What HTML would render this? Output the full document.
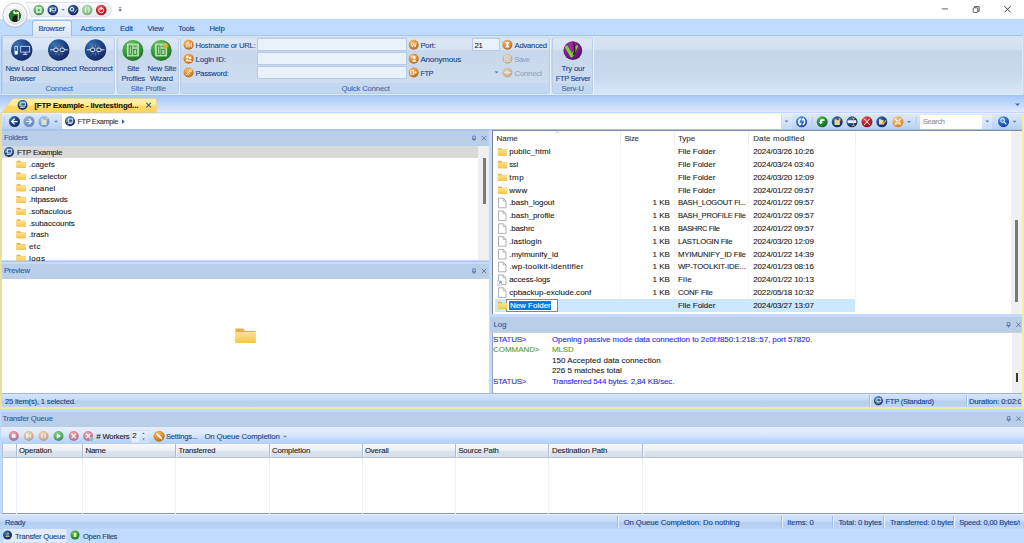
<!DOCTYPE html>
<html><head><meta charset="utf-8"><title>CuteFTP</title>
<style>
html,body{margin:0;padding:0}
body{width:1024px;height:543px;overflow:hidden;background:#bfdbff;position:relative;font-family:"Liberation Sans",sans-serif}
#root{position:absolute;left:0;top:0;width:1024px;height:543px;overflow:hidden}
#root div{position:absolute;box-sizing:border-box}
.t{position:absolute;white-space:nowrap;font-family:"Liberation Sans",sans-serif;color:#1a1a1a;-webkit-text-stroke:0.1px currentColor}
.r{color:#15428b}
.g{color:#3e6aaa}
.d{color:#8fa5c6}
.b{font-weight:bold}
svg{position:absolute;left:0;top:0}
</style></head><body><div id="root">
<div style="left:0px;top:0px;width:1024px;height:19px;background:#fff"></div>
<div style="left:0px;top:19px;width:1024px;height:17.5px;background:#bfdbff"></div>
<div style="left:0.5px;top:35.3px;width:1022.5px;height:60.2px;border:1px solid #a9c3e8;border-right-color:#dbe7f7;border-bottom-color:#d9ecf6;border-radius:3px;background:linear-gradient(#d9e5f4 0%,#d2dff0 22%,#c4d5ea 26%,#c9d9ee 70%,#d9e8f8 100%)"></div>
<div style="left:32px;top:20px;width:39.5px;height:16.2px;border:1px solid #9dbde8;border-bottom:none;border-radius:3px 3px 0 0;background:linear-gradient(#eef4fc,#dbe6f4)"></div>
<div style="left:2px;top:36.6px;width:113px;height:57.4px;border:1px solid #bccfe9;border-top-color:#cbd9ec;border-radius:3px;background:linear-gradient(#dde8f5 0%,#d5e2f2 20%,#c8d8ec 24%,#cddcef 82%,#c1d8f0 82%,#c1d8f0 100%);box-shadow:1px 0 0 #e8f0fa"></div>
<div style="left:117.4px;top:36.6px;width:61.5px;height:57.4px;border:1px solid #bccfe9;border-top-color:#cbd9ec;border-radius:3px;background:linear-gradient(#dde8f5 0%,#d5e2f2 20%,#c8d8ec 24%,#cddcef 82%,#c1d8f0 82%,#c1d8f0 100%);box-shadow:1px 0 0 #e8f0fa"></div>
<div style="left:180px;top:36.6px;width:370.29999999999995px;height:57.4px;border:1px solid #bccfe9;border-top-color:#cbd9ec;border-radius:3px;background:linear-gradient(#dde8f5 0%,#d5e2f2 20%,#c8d8ec 24%,#cddcef 82%,#c1d8f0 82%,#c1d8f0 100%);box-shadow:1px 0 0 #e8f0fa"></div>
<div style="left:552.2px;top:36.6px;width:40.59999999999991px;height:57.4px;border:1px solid #bccfe9;border-top-color:#cbd9ec;border-radius:3px;background:linear-gradient(#dde8f5 0%,#d5e2f2 20%,#c8d8ec 24%,#cddcef 82%,#c1d8f0 82%,#c1d8f0 100%);box-shadow:1px 0 0 #e8f0fa"></div>
<div style="left:257.2px;top:38.0px;width:149.8px;height:13.1px;background:#e9f1fb;border:1px solid #b7cae5"></div>
<div style="left:257.2px;top:52.05px;width:149.8px;height:13.1px;background:#e9f1fb;border:1px solid #b7cae5"></div>
<div style="left:257.2px;top:66.1px;width:149.8px;height:13.1px;background:#e9f1fb;border:1px solid #b7cae5"></div>
<div style="left:472.4px;top:38px;width:28px;height:13.1px;background:#e9f1fb;border:1px solid #b7cae5"></div>
<div style="left:0px;top:95.3px;width:1024px;height:17.2px;background:linear-gradient(#9fbff0 0%,#a9c7f7 6%,#b6d1f9 35%,#d0e1fb 75%,#e0eafb 100%)"></div>
<div style="left:0px;top:112.5px;width:1024px;height:17.5px;background:linear-gradient(#dbe8fb 0%,#c9ddf8 50%,#b7d0f3 92%,#9fbce6 100%);border-top:1px solid #f0f2e2"></div>
<div style="left:62px;top:114px;width:729.5px;height:15px;background:#fff"></div>
<div style="left:781px;top:114px;width:10.5px;height:15px;background:linear-gradient(#e4eefc,#c4d9f7);border-left:1px solid #d0e0f6"></div>
<div style="left:919.8px;top:115px;width:62.5px;height:13.5px;background:#fff"></div>
<div style="left:982.3px;top:115px;width:10.2px;height:13.5px;background:linear-gradient(#e4eefc,#c9dcf8)"></div>
<div style="left:0px;top:113px;width:2.2px;height:295.5px;background:#eadf9e"></div>
<div style="left:1022px;top:113px;width:2px;height:295.5px;background:#f4ef9a"></div>
<div style="left:0px;top:406.9px;width:1024px;height:1.8px;background:#efe8a6"></div>
<div style="left:2.2px;top:130px;width:486.8px;height:15.6px;background:#b9cee7;border-top:1px solid #a9c4ea"></div>
<div style="left:2.2px;top:145.6px;width:486.8px;height:114.9px;background:#fff;border-top:1px solid #d0d8e4"></div>
<div style="left:2.2px;top:146.2px;width:476px;height:11.4px;background:#d9d9d9"></div>
<div style="left:478px;top:146.2px;width:11px;height:114.3px;background:#f0f0f0"></div>
<div style="left:482.5px;top:158px;width:3px;height:45.5px;background:#7a7a7a"></div>
<div style="left:2.2px;top:260.5px;width:486.8px;height:3px;background:#c3dcfd;border-top:1px solid #b9c3d2"></div>
<div style="left:2.2px;top:263.5px;width:486.8px;height:15px;background:#b9cee7"></div>
<div style="left:2.2px;top:278.5px;width:486.8px;height:114.5px;background:#fff"></div>
<div style="left:489px;top:130px;width:3px;height:263px;background:#c3dcfd"></div>
<div style="left:492px;top:130px;width:530px;height:184.6px;background:#fff;border-left:1px solid #7f8794;border-top:1px solid #838b98;border-bottom:1px solid #b8c4d4"></div>
<div style="left:1011px;top:131px;width:11px;height:182.5px;background:#f0f0f0"></div>
<div style="left:1015.4px;top:219.5px;width:3px;height:82.5px;background:#7a7a7a"></div>
<div style="left:620px;top:131px;width:1px;height:182px;background:#f7f7f7"></div>
<div style="left:620px;top:131px;width:1px;height:14px;background:#eeeeee"></div>
<div style="left:673.5px;top:131px;width:1px;height:182px;background:#f7f7f7"></div>
<div style="left:673.5px;top:131px;width:1px;height:14px;background:#eeeeee"></div>
<div style="left:748px;top:131px;width:1px;height:182px;background:#f7f7f7"></div>
<div style="left:748px;top:131px;width:1px;height:14px;background:#eeeeee"></div>
<div style="left:855.4px;top:131px;width:1px;height:182px;background:#f7f7f7"></div>
<div style="left:855.4px;top:131px;width:1px;height:14px;background:#eeeeee"></div>
<div style="left:495.2px;top:299px;width:360.2px;height:12.8px;background:#cce8ff"></div>
<div style="left:506.2px;top:299px;width:52.3px;height:12.8px;background:#fff;border:1px solid #858585"></div>
<div style="left:509.4px;top:300.7px;width:41.5px;height:9.8px;background:#0a78d7"></div>
<div style="left:492px;top:314px;width:530px;height:3px;background:#c3dcfd"></div>
<div style="left:489.5px;top:317px;width:532.5px;height:15.2px;background:#b9cee7"></div>
<div style="left:492.3px;top:332.3px;width:529.7px;height:60.4px;background:#fff;border-left:1px solid #9aa7b8;border-top:1px solid #c8d2e0"></div>
<div style="left:1011.5px;top:333px;width:10.5px;height:59.7px;background:#f0f0f0"></div>
<div style="left:1015.5px;top:372.5px;width:2.8px;height:9.5px;background:#3a3a3a"></div>
<div style="left:2.2px;top:393px;width:1019.8px;height:1px;background:#9fb6d6"></div>
<div style="left:2.2px;top:394px;width:1019.8px;height:13.2px;background:linear-gradient(#d6e5fa 0%,#c5daf7 45%,#b3cdf2 55%,#bdd5f6 100%)"></div>
<div style="left:868.8px;top:395px;width:1px;height:11.5px;background:#9fbde6"></div>
<div style="left:869.8px;top:395px;width:1px;height:11.5px;background:#e6f0fc"></div>
<div style="left:965.8px;top:395px;width:1px;height:11.5px;background:#9fbde6"></div>
<div style="left:966.8px;top:395px;width:1px;height:11.5px;background:#e6f0fc"></div>
<div style="left:0px;top:408.6px;width:1024px;height:3px;background:#c3dcfd"></div>
<div style="left:0.5px;top:411.6px;width:1023px;height:15.3px;background:#b9cee7"></div>
<div style="left:0.5px;top:426.9px;width:1023px;height:17px;background:linear-gradient(#e4eefd 0%,#dce9fc 40%,#bed6fb 78%,#b2cffa 100%)"></div>
<div style="left:131px;top:430px;width:17.5px;height:12.5px;background:#e6effb;border:1px solid #d4e2f6"></div>
<div style="left:139px;top:430.5px;width:9px;height:11.5px;background:linear-gradient(#e8f1fd,#c6dbf8)"></div>
<div style="left:1.5px;top:443.8px;width:1021.2px;height:70.6px;background:#fff;border-left:1px solid #b4c6de;border-bottom:1px solid #8c9db5"></div>
<div style="left:2.5px;top:443.8px;width:1020.2px;height:13.8px;background:linear-gradient(#f7f9fc 0%,#eaeff6 50%,#dde4ee 55%,#d5deea 100%);border-bottom:1px solid #b7c3d4"></div>
<div style="left:15.5px;top:444px;width:1px;height:13px;background:#aebbd0"></div>
<div style="left:16.5px;top:444px;width:1px;height:13px;background:#f4f7fb"></div>
<div style="left:15.5px;top:457.6px;width:1px;height:56px;background:#edf3fa"></div>
<div style="left:82px;top:444px;width:1px;height:13px;background:#aebbd0"></div>
<div style="left:83px;top:444px;width:1px;height:13px;background:#f4f7fb"></div>
<div style="left:82px;top:457.6px;width:1px;height:56px;background:#edf3fa"></div>
<div style="left:175.4px;top:444px;width:1px;height:13px;background:#aebbd0"></div>
<div style="left:176.4px;top:444px;width:1px;height:13px;background:#f4f7fb"></div>
<div style="left:175.4px;top:457.6px;width:1px;height:56px;background:#edf3fa"></div>
<div style="left:268.5px;top:444px;width:1px;height:13px;background:#aebbd0"></div>
<div style="left:269.5px;top:444px;width:1px;height:13px;background:#f4f7fb"></div>
<div style="left:268.5px;top:457.6px;width:1px;height:56px;background:#edf3fa"></div>
<div style="left:361.5px;top:444px;width:1px;height:13px;background:#aebbd0"></div>
<div style="left:362.5px;top:444px;width:1px;height:13px;background:#f4f7fb"></div>
<div style="left:361.5px;top:457.6px;width:1px;height:56px;background:#edf3fa"></div>
<div style="left:455px;top:444px;width:1px;height:13px;background:#aebbd0"></div>
<div style="left:456px;top:444px;width:1px;height:13px;background:#f4f7fb"></div>
<div style="left:455px;top:457.6px;width:1px;height:56px;background:#edf3fa"></div>
<div style="left:548px;top:444px;width:1px;height:13px;background:#aebbd0"></div>
<div style="left:549px;top:444px;width:1px;height:13px;background:#f4f7fb"></div>
<div style="left:548px;top:457.6px;width:1px;height:56px;background:#edf3fa"></div>
<div style="left:641.5px;top:444px;width:1px;height:13px;background:#aebbd0"></div>
<div style="left:642.5px;top:444px;width:1px;height:13px;background:#f4f7fb"></div>
<div style="left:641.5px;top:457.6px;width:1px;height:56px;background:#edf3fa"></div>
<div style="left:0px;top:514.4px;width:1024px;height:14.6px;background:linear-gradient(#d5e4fa 0%,#c6dbf7 45%,#b4cdf1 55%,#bcd4f5 100%);border-top:1px solid #e4eefb"></div>
<div style="left:617px;top:516px;width:1px;height:12px;background:#9fbde6"></div>
<div style="left:618px;top:516px;width:1px;height:12px;background:#e6f0fc"></div>
<div style="left:780.5px;top:516px;width:1px;height:12px;background:#9fbde6"></div>
<div style="left:781.5px;top:516px;width:1px;height:12px;background:#e6f0fc"></div>
<div style="left:831.7px;top:516px;width:1px;height:12px;background:#9fbde6"></div>
<div style="left:832.7px;top:516px;width:1px;height:12px;background:#e6f0fc"></div>
<div style="left:882.8px;top:516px;width:1px;height:12px;background:#9fbde6"></div>
<div style="left:883.8px;top:516px;width:1px;height:12px;background:#e6f0fc"></div>
<div style="left:953.2px;top:516px;width:1px;height:12px;background:#9fbde6"></div>
<div style="left:954.2px;top:516px;width:1px;height:12px;background:#e6f0fc"></div>
<div style="left:0px;top:529px;width:1024px;height:14px;background:#bfdbff"></div>
<div style="left:2.5px;top:529px;width:64px;height:14px;background:#e0ecfb;border:1px solid #cfdff5;border-top:none"></div>
<svg width="1024" height="543" viewBox="0 0 1024 543">
<defs>
<radialGradient id="gb" cx="0.3" cy="0.25" r="0.85"><stop offset="0" stop-color="#3873b4"/><stop offset="0.5" stop-color="#1e468a"/><stop offset="1" stop-color="#14245a"/></radialGradient>
<radialGradient id="gg" cx="0.4" cy="0.3" r="0.8"><stop offset="0" stop-color="#7ccf6a"/><stop offset="0.55" stop-color="#2f9a34"/><stop offset="1" stop-color="#166a22"/></radialGradient>
<radialGradient id="go" cx="0.4" cy="0.3" r="0.8"><stop offset="0" stop-color="#f4c070"/><stop offset="0.55" stop-color="#d98a2c"/><stop offset="1" stop-color="#a55c12"/></radialGradient>
<radialGradient id="gr" cx="0.4" cy="0.3" r="0.8"><stop offset="0" stop-color="#ee6a6a"/><stop offset="0.55" stop-color="#c8202a"/><stop offset="1" stop-color="#8a1018"/></radialGradient>
<radialGradient id="gw" cx="0.42" cy="0.32" r="0.78"><stop offset="0" stop-color="#ffffff"/><stop offset="0.55" stop-color="#eceff3"/><stop offset="0.85" stop-color="#cfd4dc"/><stop offset="1" stop-color="#9aa2b0"/></radialGradient>
<linearGradient id="gf" x1="0" y1="0" x2="0" y2="1"><stop offset="0" stop-color="#ffe28a"/><stop offset="1" stop-color="#f7c64a"/></linearGradient>
<radialGradient id="gb2" cx="0.35" cy="0.25" r="0.85"><stop offset="0" stop-color="#6aa8f0"/><stop offset="0.5" stop-color="#2a66c8"/><stop offset="1" stop-color="#163a8a"/></radialGradient>
<radialGradient id="gg2" cx="0.35" cy="0.25" r="0.85"><stop offset="0" stop-color="#58b860"/><stop offset="0.5" stop-color="#228a34"/><stop offset="1" stop-color="#125a20"/></radialGradient>
<radialGradient id="gr2" cx="0.35" cy="0.25" r="0.85"><stop offset="0" stop-color="#e05a5a"/><stop offset="0.5" stop-color="#b8222c"/><stop offset="1" stop-color="#7a1018"/></radialGradient>
<radialGradient id="go2" cx="0.35" cy="0.25" r="0.85"><stop offset="0" stop-color="#f8cc88"/><stop offset="0.55" stop-color="#e8a04c"/><stop offset="1" stop-color="#c07828"/></radialGradient>
</defs>

<defs><linearGradient id="gp" x1="0" y1="0" x2="0" y2="1"><stop offset="0" stop-color="#fbfcfd"/><stop offset="1" stop-color="#e6e9ef"/></linearGradient></defs>
<path d="M26 2.4 H104 a7.2 7.2 0 0 1 0 14.4 H31.5 C29.5 13 29 6 26 2.4 z" fill="url(#gp)" stroke="#cdd2da" stroke-width="0.7"/>
<circle cx="15" cy="15.2" r="12.2" fill="url(#gw)" stroke="#bcc2cc" stroke-width="0.9"/>
<circle cx="15" cy="15.2" r="10.6" fill="none" stroke="#fff" stroke-width="1.2" opacity="0.8"/>
<circle cx="15" cy="15.8" r="6.2" fill="#1d7a2e"/><path d="M12.8 12 l2 -2.6 1.2 2.2 3 0.4 v2 h-5z" fill="#efe8a8"/><path d="M12 21 q0.5 -5 3 -5.5 h2.2 v6 q-2.5 1 -5.2 -0.5z" fill="#1c1a18"/><path d="M14.6 9.8 l1.5 2.4" stroke="#222" stroke-width="1"/><path d="M18.4 14 v6.2" stroke="#e8f0e0" stroke-width="0.8"/>
<g opacity="0.8"><circle cx="38.8" cy="10" r="5.3" fill="url(#gg)"/><rect x="36.6" y="7.6" width="4.6" height="4.8" fill="#bfe3b8" stroke="#e4f4e0" stroke-width="0.7"/><rect x="38" y="9" width="1.8" height="2.2" fill="#2f8f3a"/></g>
<g opacity="1"><circle cx="52.8" cy="10" r="5.3" fill="url(#gb)"/><rect x="49.6" y="8" width="1.3" height="4" fill="#fff"/><rect x="51.8" y="8" width="4" height="2.8" fill="none" stroke="#fff" stroke-width="0.8"/><path d="M52.6 12.2 h2.6" stroke="#fff" stroke-width="0.7"/></g>
<path d="M61.3 8.950000000000001 h3.4 l-1.7 1.7 z" fill="#5a7ab0"/>
<g opacity="1"><circle cx="73.2" cy="10" r="5.3" fill="url(#gb)"/><circle cx="72" cy="9.2" r="1.8" fill="none" stroke="#fff" stroke-width="1"/><path d="M73.3 11.3 l1.4 1.3 l2.2 -3.2" stroke="#f0a030" stroke-width="1" fill="none"/></g>
<g opacity="0.5"><circle cx="87.2" cy="10" r="5.3" fill="url(#gg)"/><path d="M86 7.4 q-1.8 2.6 0 5.2 M88.4 7.4 q1.8 2.6 0 5.2" stroke="#fff" stroke-width="1" fill="none"/></g>
<g opacity="1"><circle cx="101.2" cy="10" r="5.3" fill="url(#gr)"/><circle cx="101.2" cy="10.4" r="2.5" fill="none" stroke="#fff" stroke-width="0.9"/><path d="M101.2 6.8 v3.2" stroke="#fff" stroke-width="1"/></g>
<path d="M118.8 7.8 h2.6" stroke="#3a4a8a" stroke-width="0.8"/><path d="M118.3 9.4 h3.6 l-1.8 2 z" fill="#3a4a8a"/>
<path d="M941.8 8.9 h6.2" stroke="#555" stroke-width="0.9"/>
<rect x="973.2" y="7.8" width="4.6" height="4.6" rx="0.8" fill="none" stroke="#333" stroke-width="0.8"/><path d="M974.6 7.8 v-1.2 h4.6 v4.6 h-1.4" fill="none" stroke="#333" stroke-width="0.8"/>
<path d="M1004.4 6.2 l6.2 6.2 M1010.6 6.2 l-6.2 6.2" stroke="#3a3a3a" stroke-width="1"/>
<g opacity="1"><circle cx="21.7" cy="50" r="10.7" fill="url(#gb)"/><rect x="14.9" y="46.3" width="2.5" height="7.9" fill="none" stroke="#e8eef8" stroke-width="0.7"/><rect x="14.9" y="51" width="2.5" height="3.2" fill="#fff"/><rect x="20.7" y="46.3" width="9" height="5.8" fill="#1c3f86" stroke="#d8e4f4" stroke-width="0.8"/><path d="M23 54.3 h4.4 M25.2 52.2 v2" stroke="#e8eef8" stroke-width="0.9"/></g>
<g opacity="1"><circle cx="58.7" cy="50" r="10.7" fill="url(#gb)"/><path d="M50.099999999999994 49.8 h4.4 M63.5 49.8 h4.4" stroke="#fff" stroke-width="0.8"/><rect x="53.9" y="48.1" width="4.2" height="3.4" rx="1.2" fill="#1a3a80" stroke="#fff" stroke-width="0.9"/><rect x="60.1" y="48.1" width="4.2" height="3.4" rx="1.2" fill="#1a3a80" stroke="#fff" stroke-width="0.9"/><path d="M58.9 44.5 v2.5 M58.9 53 v2.5 M55.4 45.5 l1.3 2 M62.4 45.5 l-1.3 2 M55.4 54.5 l1.3 -2 M62.4 54.5 l-1.3 -2" stroke="#c8a060" stroke-width="0.6"/></g>
<g opacity="1"><circle cx="95.5" cy="50" r="10.7" fill="url(#gb)"/><path d="M86.8 49.8 h4.4 M100.19999999999999 49.8 h4.4" stroke="#fff" stroke-width="0.8"/><rect x="90.6" y="48.1" width="4.2" height="3.4" rx="1.2" fill="#1a3a80" stroke="#fff" stroke-width="0.9"/><rect x="96.8" y="48.1" width="4.2" height="3.4" rx="1.2" fill="#1a3a80" stroke="#fff" stroke-width="0.9"/><path d="M95.6 44.5 v2.5 M95.6 53 v2.5 M92.1 45.5 l1.3 2 M99.1 45.5 l-1.3 2 M92.1 54.5 l1.3 -2 M99.1 54.5 l-1.3 -2" stroke="#c8a060" stroke-width="0.6"/></g>
<g opacity="1"><circle cx="132.9" cy="50.4" r="10.5" fill="url(#gg)"/><rect x="127.4" y="44" width="11" height="12" fill="#9ed39a" stroke="#d8f0d4" stroke-width="0.7"/><rect x="129.2" y="46" width="2.4" height="8.5" fill="none" stroke="#2f8a38" stroke-width="0.8"/><rect x="133.4" y="49.5" width="3.2" height="5" fill="none" stroke="#2f8a38" stroke-width="0.8"/><path d="M133.4 46.2 h3.4" stroke="#2f8a38" stroke-width="0.8"/></g>
<g opacity="1"><circle cx="161.2" cy="50.4" r="10.5" fill="url(#gg)"/><rect x="155.7" y="44" width="11" height="12" fill="#9ed39a" stroke="#d8f0d4" stroke-width="0.7"/><rect x="157.5" y="46" width="2.4" height="8.5" fill="none" stroke="#2f8a38" stroke-width="0.8"/><rect x="161.7" y="49.5" width="3.2" height="5" fill="none" stroke="#2f8a38" stroke-width="0.8"/><path d="M161.7 46.2 h3.4" stroke="#2f8a38" stroke-width="0.8"/><path d="M165.5 42.5 l0.9 1.9 2 -0.6 -1 1.8 1.6 1.3 -2.1 0.3 -0.1 2.1 -1.3 -1.6 -1.8 1 0.6 -2 -1.9 -0.9 2 -0.6z" fill="#f5a623"/></g>
<g opacity="1"><circle cx="188.6" cy="44.8" r="5" fill="url(#go)"/><path d="M186.2 47.4 v-4.6 M188.0 47.4 v-5.6 M189.79999999999998 47.4 v-3.6 M191.4 47.4 v-4.8" stroke="#fff" stroke-width="0.8" fill="none" opacity="0.92"/></g>
<g opacity="1"><circle cx="188.6" cy="58.65" r="5" fill="url(#go)"/><circle cx="187.4" cy="57.05" r="1.3" fill="#fff" opacity="0.92"/><path d="M185.4 61.25 q2 -4 4 0z" fill="#fff" opacity="0.92"/><circle cx="190.2" cy="58.05" r="1.2" fill="#fff" opacity="0.92"/><path d="M188.4 61.65 q1.8 -3.4 3.8 0z" fill="#fff" opacity="0.92"/></g>
<g opacity="1"><circle cx="188.6" cy="72.5" r="5" fill="url(#go)"/><path d="M186.0 75.1 l4.2 -4.2 M188.0 74.5 l1 1 M189.2 73.3 l1 1" stroke="#fff" stroke-width="0.8" fill="none" opacity="0.92"/><circle cx="190.6" cy="70.5" r="1.2" stroke="#fff" stroke-width="0.8" fill="none" opacity="0.92"/></g>
<g opacity="1"><circle cx="413.7" cy="44.8" r="5" fill="url(#go)"/><path d="M411.09999999999997 42.599999999999994 l1.2 4.4 l1.4 -3.4 l1.4 3.4 l1.2 -4.4" stroke="#fff" stroke-width="0.8" fill="none" opacity="0.92"/></g>
<g opacity="1"><circle cx="413.7" cy="58.65" r="5" fill="url(#go)"/><circle cx="414.3" cy="57.449999999999996" r="1.4" fill="#fff" opacity="0.92"/><path d="M411.9 61.65 q2.4 -4.4 4.8 0z" fill="#fff" opacity="0.92"/><path d="M410.7 56.05 q1.6 -0.8 1.4 0.8 l-0.8 0.8" stroke="#fff" stroke-width="0.8" fill="none" opacity="0.92"/></g>
<g opacity="1"><circle cx="413.7" cy="72.5" r="5" fill="url(#go)"/><rect x="410.7" y="70.7" width="3" height="3.6" stroke="#fff" stroke-width="0.8" fill="none" opacity="0.92"/><rect x="414.5" y="71.6" width="2" height="1.8" fill="#fff" opacity="0.92"/></g>
<path d="M494.7 71.39999999999999 h3.6 l-1.8 1.8 z" fill="#4a6aa0"/>
<g opacity="1"><circle cx="507.4" cy="44.8" r="5" fill="url(#go)"/><path d="M505.2 42.0 h4.4 l-1.6 2.8 l1.6 2.8 h-4.4 l1.6 -2.8z" fill="#fff" opacity="0.92"/></g>
<g opacity="0.45"><circle cx="507.4" cy="58.65" r="5" fill="url(#go)"/><rect x="504.79999999999995" y="56.05" width="5.2" height="5.2" stroke="#fff" stroke-width="0.8" fill="none" opacity="0.92"/><rect x="506.2" y="58.25" width="2.4" height="1.6" fill="#fff" opacity="0.92"/></g>
<g opacity="0.45"><circle cx="507.4" cy="72.5" r="5" fill="url(#go)"/><path d="M504.0 72.5 h6.8" stroke="#fff" stroke-width="0.8" fill="none" opacity="0.92"/><rect x="505.59999999999997" y="71.2" width="3.6" height="2.6" rx="0.8" fill="#fff" opacity="0.92"/></g>
<defs><radialGradient id="gpu" cx="0.35" cy="0.3" r="0.8"><stop offset="0" stop-color="#a030a8"/><stop offset="0.6" stop-color="#7a1a84"/><stop offset="1" stop-color="#4a0e58"/></radialGradient></defs>
<circle cx="572.8" cy="50.6" r="9.4" fill="url(#gpu)"/><path d="M566.6 47.2 l5 8.4" fill="none" stroke="#7ccf3c" stroke-width="3.2" stroke-linecap="round"/><path d="M571.8 56 l5 -9.5" fill="none" stroke="#7ccf3c" stroke-width="2.6" stroke-linecap="round"/><path d="M572.5 55.5 q2.5 -7 0.2 -14.8 q4 6 2.4 13z" fill="#2a1c20"/>
<defs><linearGradient id="gt" x1="0" y1="0" x2="0" y2="1"><stop offset="0" stop-color="#fff3a8"/><stop offset="0.47" stop-color="#ffec90"/><stop offset="0.53" stop-color="#ffd868"/><stop offset="1" stop-color="#ffd25a"/></linearGradient></defs>
<path d="M2 112.6 L12.5 99.2 Q13 98.6 14 98.6 H155 Q156.3 98.6 156.3 99.9 V112.6 z" fill="url(#gt)" stroke="#e8c870" stroke-width="0.5"/>
<g opacity="1"><circle cx="22.5" cy="105" r="5" fill="url(#gb)"/><ellipse cx="22.5" cy="102.75" rx="3.5" ry="2.0" fill="#7fb0e8" opacity="0.55"/><rect x="20.9" y="102.8" width="4.4" height="3.2" fill="#2a5aa0" stroke="#fff" stroke-width="0.8"/><path d="M20.1 107.4 h4.6" stroke="#fff" stroke-width="0.8"/><path d="M18.9 103.4 l2.2 1.3 l-2.2 1.3z" fill="#9ad24e"/></g>
<path d="M146.3 102.8 l4.6 4.6 M150.9 102.8 l-4.6 4.6" stroke="#34528f" stroke-width="1.05"/>
<path d="M1014.9 103.5 h5.2 l-2.6 2.6 z" fill="#4a6aa8"/>
<rect x="4" y="117.5" width="1" height="1" fill="#8fb0e0"/><rect x="4.6" y="118.1" width="0.8" height="0.8" fill="#f0f6fe"/>
<rect x="4" y="119.5" width="1" height="1" fill="#8fb0e0"/><rect x="4.6" y="120.1" width="0.8" height="0.8" fill="#f0f6fe"/>
<rect x="4" y="121.5" width="1" height="1" fill="#8fb0e0"/><rect x="4.6" y="122.1" width="0.8" height="0.8" fill="#f0f6fe"/>
<rect x="4" y="123.5" width="1" height="1" fill="#8fb0e0"/><rect x="4.6" y="124.1" width="0.8" height="0.8" fill="#f0f6fe"/>
<g opacity="1"><circle cx="14.5" cy="121.6" r="5.5" fill="url(#gb)"/><path d="M17.6 121.6 h-5.6 M14.6 118.8 l-2.9 2.8 2.9 2.8" fill="none" stroke="#fff" stroke-width="1.2"/></g>
<g opacity="0.45"><circle cx="29" cy="121.5" r="5.5" fill="url(#gb)"/><path d="M26 121.5 h5.5 M28.7 118.8 l2.8 2.7 -2.8 2.7" fill="none" stroke="#fff" stroke-width="1.2"/></g>
<g opacity="0.45"><circle cx="44" cy="121.6" r="5.5" fill="url(#gb2)"/><path d="M41.4 119.2 h2 l0.6 0.7 h2.6 v5 h-5.2z" fill="#f8e8a8"/><circle cx="46.6" cy="118.6" r="1.2" fill="#f5a623"/></g>
<path d="M54.1 120.85 h3.8 l-1.9 1.9 z" fill="#5a7ab0"/>
<path d="M784.6 120.55 h3.8 l-1.9 1.9 z" fill="#5a7ab0"/>
<g opacity="1"><circle cx="70" cy="121.2" r="5" fill="url(#gb)"/><ellipse cx="70" cy="118.95" rx="3.5" ry="2.0" fill="#7fb0e8" opacity="0.55"/><rect x="68.4" y="119.0" width="4.4" height="3.2" fill="#2a5aa0" stroke="#fff" stroke-width="0.8"/><path d="M67.6 123.60000000000001 h4.6" stroke="#fff" stroke-width="0.8"/><path d="M66.4 119.60000000000001 l2.2 1.3 l-2.2 1.3z" fill="#9ad24e"/></g>
<path d="M122 119.2 l2.6 2.4 -2.6 2.4z" fill="#3a5a9a"/>
<g opacity="1"><circle cx="801.6" cy="121.8" r="5.5" fill="url(#gb2)"/><path d="M800.6 118.6 q-3.4 2.6 -0.6 6.2 l1.2 -1.4 M802.8 125.0 q3.4 -2.6 0.6 -6.2 l-1.2 1.4" fill="none" stroke="#fff" stroke-width="1.5"/></g>
<rect x="812" y="117.5" width="1" height="1" fill="#8fb0e0"/><rect x="812.6" y="118.1" width="0.8" height="0.8" fill="#f0f6fe"/>
<rect x="812" y="119.5" width="1" height="1" fill="#8fb0e0"/><rect x="812.6" y="120.1" width="0.8" height="0.8" fill="#f0f6fe"/>
<rect x="812" y="121.5" width="1" height="1" fill="#8fb0e0"/><rect x="812.6" y="122.1" width="0.8" height="0.8" fill="#f0f6fe"/>
<rect x="812" y="123.5" width="1" height="1" fill="#8fb0e0"/><rect x="812.6" y="124.1" width="0.8" height="0.8" fill="#f0f6fe"/>
<g opacity="1"><circle cx="822.2" cy="121.8" r="5.5" fill="url(#gg2)"/><path d="M824.6 119.39999999999999 q-4.4 -1.4 -4.6 2.6 l-1.2 0 l2 2.6 l2 -2.6 l-1.2 0 q0.2 -1.8 3 -1.2z" fill="#fff"/></g>
<g opacity="1"><circle cx="837.2" cy="121.8" r="5.5" fill="url(#gb)"/><path d="M834.6 119.39999999999999 h2 l0.6 0.7 h2.6 v5 h-5.2z" fill="#f0dc98"/><path d="M837.2 119.8 v5" stroke="#c8a850" stroke-width="0.5"/><path d="M839.6 117.39999999999999 l0.6 1.2 1.3 0.1 -1 0.9 0.3 1.3 -1.2 -0.7 -1.2 0.7 0.3 -1.3 -1 -0.9 1.3 -0.1z" fill="#f5a623"/></g>
<g opacity="1"><circle cx="852" cy="121.8" r="5.5" fill="url(#gb)"/><rect x="847.6" y="120.3" width="8.6" height="2.8" fill="#fff"/><path d="M853.4 118.0 v7.6 M851.8 117.89999999999999 q1.6 0 1.6 0.8 q0 -0.8 1.6 -0.8 M851.8 125.7 q1.6 0 1.6 -0.8 q0 0.8 1.6 0.8" stroke="#f0c040" stroke-width="0.7" fill="none"/></g>
<g opacity="1"><circle cx="867" cy="121.8" r="5.5" fill="url(#gr2)"/><path d="M864 118.6 l6 6.4 M870 118.6 l-6 6.4" stroke="#f4e8e0" stroke-width="1"/></g>
<g opacity="1"><circle cx="881.8" cy="121.8" r="5.5" fill="url(#gb)"/><path d="M879 119.2 h2 l0.6 0.7 h1.8 v4.6 h-4.4z" fill="#f0dc98"/><path d="M882.2 122.39999999999999 l1.3 1.5 2.6 -3.8" stroke="#f5b030" stroke-width="1.1" fill="none"/></g>
<g opacity="1"><circle cx="897.9" cy="121.8" r="5.5" fill="url(#go2)"/><path d="M895.2 119.2 l5.4 5.2 M900.6 119.2 l-5.4 5.2" stroke="#fff" stroke-width="0.7" opacity="0.9"/><rect x="896.4" y="120.39999999999999" width="3" height="2.8" fill="#f0b870" stroke="#fff" stroke-width="0.6"/><path d="M894.6 118.8 h1.6 v1.2 h-1.6z M899.6 118.8 h1.6 v1.2 h-1.6z M894.6 123.6 h1.6 v1.2 h-1.6z M899.6 123.6 h1.6 v1.2 h-1.6z" fill="#fff" opacity="0.85"/></g>
<path d="M907.1 121.05 h3.8 l-1.9 1.9 z" fill="#5a7ab0"/>
<rect x="916" y="117.5" width="1" height="1" fill="#8fb0e0"/><rect x="916.6" y="118.1" width="0.8" height="0.8" fill="#f0f6fe"/>
<rect x="916" y="119.5" width="1" height="1" fill="#8fb0e0"/><rect x="916.6" y="120.1" width="0.8" height="0.8" fill="#f0f6fe"/>
<rect x="916" y="121.5" width="1" height="1" fill="#8fb0e0"/><rect x="916.6" y="122.1" width="0.8" height="0.8" fill="#f0f6fe"/>
<rect x="916" y="123.5" width="1" height="1" fill="#8fb0e0"/><rect x="916.6" y="124.1" width="0.8" height="0.8" fill="#f0f6fe"/>
<path d="M985.4 120.55 h3.8 l-1.9 1.9 z" fill="#5a7ab0"/>
<g opacity="1"><circle cx="1003.5" cy="121.7" r="5.5" fill="url(#gb2)"/><circle cx="1002.6" cy="120.4" r="1.9" fill="none" stroke="#fff" stroke-width="0.9"/><path d="M1004 121.9 l2.4 2.4" stroke="#fff" stroke-width="1.1"/></g>
<path d="M1012.6 120.85 h3.8 l-1.9 1.9 z" fill="#5a7ab0"/>
<path d="M472.7 136.0 h2.6 v3.2 h-2.6z M471.8 139.2 h4.4 M474 139.2 v2" fill="none" stroke="#4a6aa0" stroke-width="0.7"/>
<path d="M481.8 136.0 l4.4 4.4 M486.2 136.0 l-4.4 4.4" stroke="#4a6aa0" stroke-width="0.8"/>
<g opacity="1"><circle cx="9" cy="152" r="5" fill="url(#gb)"/><ellipse cx="9" cy="149.75" rx="3.5" ry="2.0" fill="#7fb0e8" opacity="0.55"/><rect x="7.4" y="149.8" width="4.4" height="3.2" fill="#2a5aa0" stroke="#fff" stroke-width="0.8"/><path d="M6.6 154.4 h4.6" stroke="#fff" stroke-width="0.8"/><path d="M5.4 150.4 l2.2 1.3 l-2.2 1.3z" fill="#9ad24e"/></g>
<path d="M16.5 160.85 h3.61 l0.9500000000000001 1.216 h4.94 v5.784 h-9.5 z" fill="#e9b040"/><rect x="16.5" y="162.302" width="9.5" height="5.548" rx="0.5" fill="url(#gf)"/>
<path d="M16.5 172.57999999999998 h3.61 l0.9500000000000001 1.216 h4.94 v5.784 h-9.5 z" fill="#e9b040"/><rect x="16.5" y="174.03199999999998" width="9.5" height="5.548" rx="0.5" fill="url(#gf)"/>
<path d="M16.5 184.31 h3.61 l0.9500000000000001 1.216 h4.94 v5.784 h-9.5 z" fill="#e9b040"/><rect x="16.5" y="185.762" width="9.5" height="5.548" rx="0.5" fill="url(#gf)"/>
<path d="M16.5 196.04 h3.61 l0.9500000000000001 1.216 h4.94 v5.784 h-9.5 z" fill="#e9b040"/><rect x="16.5" y="197.492" width="9.5" height="5.548" rx="0.5" fill="url(#gf)"/>
<path d="M16.5 207.77 h3.61 l0.9500000000000001 1.216 h4.94 v5.784 h-9.5 z" fill="#e9b040"/><rect x="16.5" y="209.222" width="9.5" height="5.548" rx="0.5" fill="url(#gf)"/>
<path d="M16.5 219.5 h3.61 l0.9500000000000001 1.216 h4.94 v5.784 h-9.5 z" fill="#e9b040"/><rect x="16.5" y="220.952" width="9.5" height="5.548" rx="0.5" fill="url(#gf)"/>
<path d="M16.5 231.23 h3.61 l0.9500000000000001 1.216 h4.94 v5.784 h-9.5 z" fill="#e9b040"/><rect x="16.5" y="232.682" width="9.5" height="5.548" rx="0.5" fill="url(#gf)"/>
<path d="M16.5 242.96 h3.61 l0.9500000000000001 1.216 h4.94 v5.784 h-9.5 z" fill="#e9b040"/><rect x="16.5" y="244.412" width="9.5" height="5.548" rx="0.5" fill="url(#gf)"/>
<clipPath id="ctree"><rect x="2" y="146" width="476" height="114.4"/></clipPath><g clip-path="url(#ctree)">
<path d="M16.5 254.70000000000002 h3.61 l0.9500000000000001 1.216 h4.94 v5.784 h-9.5 z" fill="#e9b040"/><rect x="16.5" y="256.15200000000004" width="9.5" height="5.548" rx="0.5" fill="url(#gf)"/>
</g>
<path d="M472.7 268.8 h2.6 v3.2 h-2.6z M471.8 272 h4.4 M474 272 v2" fill="none" stroke="#4a6aa0" stroke-width="0.7"/>
<path d="M481.8 268.8 l4.4 4.4 M486.2 268.8 l-4.4 4.4" stroke="#4a6aa0" stroke-width="0.8"/>
<path d="M235.5 328.6 h7.6 l2.0 2.4 h10.4 v12.0 h-20 z" fill="#e9b040"/><rect x="235.5" y="332.05" width="20" height="10.95" rx="0.5" fill="url(#gf)"/>
<path d="M555.3 133.4 l2 -1.8 2 1.8" fill="none" stroke="#9a9a9a" stroke-width="0.6"/>
<path d="M497.9 148.20000000000002 h3.4959999999999996 l0.9199999999999999 1.248 h4.784 v5.952 h-9.2 z" fill="#e9b040"/><rect x="497.9" y="149.70600000000002" width="9.2" height="5.694" rx="0.5" fill="url(#gf)"/>
<path d="M497.9 161.00000000000003 h3.4959999999999996 l0.9199999999999999 1.248 h4.784 v5.952 h-9.2 z" fill="#e9b040"/><rect x="497.9" y="162.50600000000003" width="9.2" height="5.694" rx="0.5" fill="url(#gf)"/>
<path d="M497.9 173.8 h3.4959999999999996 l0.9199999999999999 1.248 h4.784 v5.952 h-9.2 z" fill="#e9b040"/><rect x="497.9" y="175.306" width="9.2" height="5.694" rx="0.5" fill="url(#gf)"/>
<path d="M497.9 186.60000000000002 h3.4959999999999996 l0.9199999999999999 1.248 h4.784 v5.952 h-9.2 z" fill="#e9b040"/><rect x="497.9" y="188.10600000000002" width="9.2" height="5.694" rx="0.5" fill="url(#gf)"/>
<path d="M498.5 198.2 h4.695 l2.805 2.805 v6.795 h-7.5 z" fill="#fff" stroke="#969696" stroke-width="0.75"/><path d="M503.195 198.2 v2.805 h2.805" fill="none" stroke="#969696" stroke-width="0.65"/>
<path d="M498.5 211.0 h4.695 l2.805 2.805 v6.795 h-7.5 z" fill="#fff" stroke="#969696" stroke-width="0.75"/><path d="M503.195 211.0 v2.805 h2.805" fill="none" stroke="#969696" stroke-width="0.65"/>
<path d="M498.5 223.8 h4.695 l2.805 2.805 v6.795 h-7.5 z" fill="#fff" stroke="#969696" stroke-width="0.75"/><path d="M503.195 223.8 v2.805 h2.805" fill="none" stroke="#969696" stroke-width="0.65"/>
<path d="M498.5 236.60000000000002 h4.695 l2.805 2.805 v6.795 h-7.5 z" fill="#fff" stroke="#969696" stroke-width="0.75"/><path d="M503.195 236.60000000000002 v2.805 h2.805" fill="none" stroke="#969696" stroke-width="0.65"/>
<path d="M498.5 249.4 h4.695 l2.805 2.805 v6.795 h-7.5 z" fill="#fff" stroke="#969696" stroke-width="0.75"/><path d="M503.195 249.4 v2.805 h2.805" fill="none" stroke="#969696" stroke-width="0.65"/>
<path d="M498.5 262.2 h4.695 l2.805 2.805 v6.795 h-7.5 z" fill="#fff" stroke="#969696" stroke-width="0.75"/><path d="M503.195 262.2 v2.805 h2.805" fill="none" stroke="#969696" stroke-width="0.65"/>
<path d="M498.5 275.0 h4.695 l2.805 2.805 v6.795 h-7.5 z" fill="#fff" stroke="#969696" stroke-width="0.75"/><path d="M503.195 275.0 v2.805 h2.805" fill="none" stroke="#969696" stroke-width="0.65"/>
<rect x="497.6" y="281.0" width="4.2" height="4.2" fill="#fff" stroke="#9ab" stroke-width="0.4"/><path d="M498.4 284.40000000000003 l2.4 -2.4 M499.2 281.8 h1.8 v1.8" stroke="#2a5fd0" stroke-width="0.7" fill="none"/>
<path d="M498.5 287.8 h4.695 l2.805 2.805 v6.795 h-7.5 z" fill="#fff" stroke="#969696" stroke-width="0.75"/><path d="M503.195 287.8 v2.805 h2.805" fill="none" stroke="#969696" stroke-width="0.65"/>
<path d="M497.9 301.80000000000007 h3.4959999999999996 l0.9199999999999999 1.248 h4.784 v5.952 h-9.2 z" fill="#e9b040"/><rect x="497.9" y="303.30600000000004" width="9.2" height="5.694" rx="0.5" fill="url(#gf)"/>
<path d="M1007.2 322.5 h2.6 v3.2 h-2.6z M1006.3 325.7 h4.4 M1008.5 325.7 v2" fill="none" stroke="#4a6aa0" stroke-width="0.7"/>
<path d="M1016.3 322.5 l4.4 4.4 M1020.7 322.5 l-4.4 4.4" stroke="#4a6aa0" stroke-width="0.8"/>
<g opacity="1"><circle cx="878.4" cy="400.8" r="4.5" fill="url(#gb)"/><ellipse cx="878.4" cy="398.77500000000003" rx="3.15" ry="1.8" fill="#7fb0e8" opacity="0.55"/><rect x="876.9599999999999" y="398.82" width="3.9600000000000004" height="2.8800000000000003" fill="#2a5aa0" stroke="#fff" stroke-width="0.7200000000000001"/><path d="M876.24 402.96000000000004 h4.14" stroke="#fff" stroke-width="0.7200000000000001"/><path d="M875.16 399.36 l1.9800000000000002 1.1700000000000002 l-1.9800000000000002 1.1700000000000002z" fill="#9ad24e"/></g>
<path d="M1007.4000000000001 416.6 h2.6 v3.2 h-2.6z M1006.5 419.8 h4.4 M1008.7 419.8 v2" fill="none" stroke="#4a6aa0" stroke-width="0.7"/>
<path d="M1016.4 416.6 l4.4 4.4 M1020.8000000000001 416.6 l-4.4 4.4" stroke="#4a6aa0" stroke-width="0.8"/>
<g opacity="0.5"><circle cx="13.75" cy="436" r="5" fill="url(#gr)"/><rect x="11.9" y="434.2" width="3.7" height="3.7" fill="#fff"/></g>
<g opacity="0.5"><circle cx="28.75" cy="436" r="5" fill="url(#go)"/><path d="M26.6 433.8 l3 2.2 -3 2.2z M30.6 433.8 v4.4" fill="#fff" stroke="#fff" stroke-width="0.8"/></g>
<g opacity="0.5"><circle cx="43.5" cy="436" r="5" fill="url(#go)"/><path d="M42 433.8 v4.4 M45 433.8 v4.4" stroke="#fff" stroke-width="1.2"/></g>
<g opacity="0.75"><circle cx="58.5" cy="436" r="5" fill="url(#gg)"/><path d="M56.8 433.3 l4.2 2.7 -4.2 2.7z" fill="#fff"/></g>
<g opacity="0.5"><circle cx="73.75" cy="436" r="5" fill="url(#gr)"/><path d="M71.6 433.8 l4.3 4.4 M75.9 433.8 l-4.3 4.4" stroke="#fff" stroke-width="1.3"/></g>
<g opacity="0.5"><circle cx="88.1" cy="436" r="5" fill="url(#gr)"/><path d="M86 433.8 l4.3 4.4 M90.3 433.8 l-4.3 4.4" stroke="#fff" stroke-width="1.3"/><circle cx="91.3" cy="439.2" r="2" fill="#5cb85c"/></g>
<path d="M142.2 434 l1.3 -1.5 1.3 1.5z M142.2 438.5 l1.3 1.5 1.3 -1.5z" fill="#4a6aa8"/>
<g opacity="1"><circle cx="159.1" cy="436.2" r="5.5" fill="url(#go)"/><path d="M156.8 434 l4.6 4.4" stroke="#fff" stroke-width="1.5" stroke-linecap="round"/></g>
<path d="M283.1 435.65000000000003 h3.8 l-1.9 1.9 z" fill="#5a7ab0"/>
<g opacity="1"><circle cx="7.5" cy="535" r="4.5" fill="url(#gb)"/><path d="M5.5 536.5 h4 M6 535 h3 M7 533.4 h2" stroke="#f0d070" stroke-width="0.8"/></g>
<g opacity="1"><circle cx="75" cy="535" r="4.5" fill="url(#gg)"/><path d="M73.8 533 h2.6 v4 h-2.6z" fill="#f4e9a0"/></g>
</svg>
<span class="t r" id="t0" style="top:24px;font-size:7.63px;line-height:9px;left:38.40px;letter-spacing:-0.211px;">Browser</span>
<span class="t r" id="t1" style="top:24px;font-size:7.72px;line-height:9px;left:80.40px;letter-spacing:-0.140px;">Actions</span>
<span class="t r" id="t2" style="top:24px;font-size:7.71px;line-height:9px;left:120.10px;letter-spacing:-0.138px;">Edit</span>
<span class="t r" id="t3" style="top:24px;font-size:7.74px;line-height:9px;left:147.50px;letter-spacing:-0.150px;">View</span>
<span class="t r" id="t4" style="top:24px;font-size:7.55px;line-height:9px;left:178.20px;letter-spacing:-0.228px;">Tools</span>
<span class="t r" id="t5" style="top:24px;font-size:7.7px;line-height:9px;left:209.40px;letter-spacing:-0.175px;">Help</span>
<span class="t g" id="t6" style="top:84px;font-size:7.68px;line-height:9px;left:45.40px;letter-spacing:-0.181px;">Connect</span>
<span class="t g" id="t7" style="top:84px;font-size:7.62px;line-height:9px;left:130.80px;letter-spacing:-0.156px;">Site Profile</span>
<span class="t g" id="t8" style="top:84px;font-size:7.69px;line-height:9px;left:341.40px;letter-spacing:-0.162px;">Quick Connect</span>
<span class="t g" id="t9" style="top:84px;font-size:7.6px;line-height:9px;left:561.40px;letter-spacing:-0.226px;">Serv-U</span>
<span class="t r" id="t10" style="top:64px;font-size:7.58px;line-height:9px;left:5.40px;letter-spacing:-0.234px;">New Local</span>
<span class="t r" id="t11" style="top:74px;font-size:7.53px;line-height:9px;left:9.40px;letter-spacing:-0.258px;">Browser</span>
<span class="t r" id="t12" style="top:64px;font-size:7.58px;line-height:9px;left:41.40px;letter-spacing:-0.221px;">Disconnect</span>
<span class="t r" id="t13" style="top:64px;font-size:7.55px;line-height:9px;left:78.90px;letter-spacing:-0.258px;">Reconnect</span>
<span class="t r" id="t14" style="top:64px;font-size:7.62px;line-height:9px;left:126.90px;letter-spacing:-0.179px;">Site</span>
<span class="t r" id="t15" style="top:74px;font-size:7.52px;line-height:9px;left:121.50px;letter-spacing:-0.208px;">Profiles</span>
<span class="t r" id="t16" style="top:64px;font-size:7.6px;line-height:9px;left:147.50px;letter-spacing:-0.212px;">New Site</span>
<span class="t r" id="t17" style="top:74px;font-size:7.65px;line-height:9px;left:150.10px;letter-spacing:-0.197px;">Wizard</span>
<span class="t r" id="t18" style="top:41px;font-size:7.63px;line-height:9px;left:195.50px;letter-spacing:-0.191px;">Hostname or URL:</span>
<span class="t r" id="t19" style="top:55px;font-size:7.78px;line-height:9px;left:195.50px;letter-spacing:-0.093px;">Login ID:</span>
<span class="t r" id="t20" style="top:69px;font-size:7.57px;line-height:9px;left:195.50px;letter-spacing:-0.237px;">Password:</span>
<span class="t r" id="t21" style="top:41px;font-size:7.64px;line-height:9px;left:420.40px;letter-spacing:-0.158px;">Port:</span>
<span class="t r" id="t22" style="top:55px;font-size:8px;line-height:9px;left:420.40px;letter-spacing:-0.159px;">Anonymous</span>
<span class="t r" id="t23" style="top:69px;font-size:7.39px;line-height:9px;left:420.40px;letter-spacing:-0.455px;">FTP</span>
<span class="t " id="t24" style="top:41px;font-size:7.77px;line-height:9px;left:474.40px;letter-spacing:-0.160px;">21</span>
<span class="t r" id="t25" style="top:41px;font-size:7.65px;line-height:9px;left:514.50px;letter-spacing:-0.198px;">Advanced</span>
<span class="t d" id="t26" style="top:55px;font-size:7.29px;line-height:9px;left:514.50px;letter-spacing:-0.460px;">Save</span>
<span class="t d" id="t27" style="top:69px;font-size:7.69px;line-height:9px;left:514.50px;letter-spacing:-0.175px;">Connect</span>
<span class="t r" id="t28" style="top:64px;font-size:7.74px;line-height:9px;left:561.40px;letter-spacing:-0.126px;">Try our</span>
<span class="t r" id="t29" style="top:74px;font-size:7.4px;line-height:9px;left:555.80px;letter-spacing:-0.322px;">FTP Server</span>
<span class="t b" id="t30" style="top:101px;font-size:7.74px;line-height:9px;left:34.40px;letter-spacing:-0.116px;color:#111">[FTP Example - livetestingd...</span>
<span class="t " id="t31" style="top:117px;font-size:7.39px;line-height:9px;left:77.40px;letter-spacing:-0.347px;color:#333">FTP Example</span>
<span class="t " id="t32" style="top:117px;font-size:7.45px;line-height:9px;left:922.90px;letter-spacing:-0.305px;color:#909090">Search</span>
<span class="t r" id="t33" style="top:133px;font-size:7.58px;line-height:9px;left:3.90px;letter-spacing:-0.213px;color:#2b5aa5">Folders</span>
<span class="t " id="t34" style="top:148px;font-size:8.01px;line-height:9px;left:16.90px;letter-spacing:-0.277px;">FTP Example</span>
<span class="t " id="t35" style="top:160px;font-size:8px;line-height:9px;left:28.90px;letter-spacing:0.016px;">.cagefs</span>
<span class="t " id="t36" style="top:172px;font-size:8px;line-height:9px;left:28.90px;letter-spacing:-0.029px;">.cl.selector</span>
<span class="t " id="t37" style="top:184px;font-size:8px;line-height:9px;left:28.90px;letter-spacing:0.093px;">.cpanel</span>
<span class="t " id="t38" style="top:195px;font-size:8px;line-height:9px;left:28.90px;letter-spacing:-0.119px;">.htpasswds</span>
<span class="t " id="t39" style="top:207px;font-size:8px;line-height:9px;left:28.90px;letter-spacing:0.017px;">.softaculous</span>
<span class="t " id="t40" style="top:219px;font-size:8px;line-height:9px;left:28.90px;letter-spacing:-0.108px;">.subaccounts</span>
<span class="t " id="t41" style="top:230px;font-size:8px;line-height:9px;left:28.90px;letter-spacing:-0.021px;">.trash</span>
<span class="t " id="t42" style="top:242px;font-size:8px;line-height:9px;left:28.90px;letter-spacing:0.491px;">etc</span>
<span class="t " id="t43" style="top:254px;font-size:8px;line-height:9px;left:28.90px;letter-spacing:0.489px;overflow:hidden;height:7px">logs</span>
<span class="t r" id="t44" style="top:266px;font-size:7.64px;line-height:9px;left:3.90px;letter-spacing:-0.188px;color:#2b5aa5">Preview</span>
<span class="t " id="t45" style="top:134px;font-size:8px;line-height:9px;left:496.40px;letter-spacing:0.016px;color:#333">Name</span>
<span class="t " id="t46" style="top:134px;font-size:7.7px;line-height:9px;left:624.40px;letter-spacing:-0.162px;color:#333">Size</span>
<span class="t " id="t47" style="top:134px;font-size:8px;line-height:9px;left:677.90px;letter-spacing:0.016px;color:#333">Type</span>
<span class="t " id="t48" style="top:134px;font-size:8px;line-height:9px;left:753.20px;letter-spacing:0.155px;color:#333">Date modified</span>
<span class="t " id="t49" style="top:147px;font-size:8px;line-height:9px;left:509.20px;letter-spacing:0.089px;">public_html</span>
<span class="t " id="t50" style="top:147px;font-size:8px;line-height:9px;left:677.90px;letter-spacing:-0.038px;">File Folder</span>
<span class="t " id="t51" style="top:147px;font-size:8px;line-height:9px;left:753.20px;letter-spacing:-0.108px;">2024/03/26 10:26</span>
<span class="t " id="t52" style="top:160px;font-size:7.6px;line-height:9px;left:509.20px;letter-spacing:-0.192px;">ssl</span>
<span class="t " id="t53" style="top:160px;font-size:8px;line-height:9px;left:677.90px;letter-spacing:-0.038px;">File Folder</span>
<span class="t " id="t54" style="top:160px;font-size:8px;line-height:9px;left:753.20px;letter-spacing:-0.108px;">2024/03/24 03:40</span>
<span class="t " id="t55" style="top:173px;font-size:8px;line-height:9px;left:509.20px;letter-spacing:0.583px;">tmp</span>
<span class="t " id="t56" style="top:173px;font-size:8px;line-height:9px;left:677.90px;letter-spacing:-0.038px;">File Folder</span>
<span class="t " id="t57" style="top:173px;font-size:8px;line-height:9px;left:753.20px;letter-spacing:-0.108px;">2024/03/20 12:09</span>
<span class="t " id="t58" style="top:186px;font-size:8px;line-height:9px;left:509.20px;letter-spacing:0.383px;">www</span>
<span class="t " id="t59" style="top:186px;font-size:8px;line-height:9px;left:677.90px;letter-spacing:-0.038px;">File Folder</span>
<span class="t " id="t60" style="top:186px;font-size:8px;line-height:9px;left:753.20px;letter-spacing:-0.108px;">2024/01/22 09:57</span>
<span class="t " id="t61" style="top:198px;font-size:8px;line-height:9px;left:509.20px;letter-spacing:-0.046px;">.bash_logout</span>
<span class="t " id="t62" style="top:198px;font-size:8px;line-height:9px;right:354.10px;">1 KB</span>
<span class="t " id="t63" style="top:198px;font-size:7.6px;line-height:9px;left:677.90px;letter-spacing:-0.225px;">BASH_LOGOUT Fi...</span>
<span class="t " id="t64" style="top:198px;font-size:8px;line-height:9px;left:753.20px;letter-spacing:-0.108px;">2024/01/22 09:57</span>
<span class="t " id="t65" style="top:211px;font-size:8px;line-height:9px;left:509.20px;letter-spacing:-0.041px;">.bash_profile</span>
<span class="t " id="t66" style="top:211px;font-size:8px;line-height:9px;right:354.10px;">1 KB</span>
<span class="t " id="t67" style="top:211px;font-size:7.59px;line-height:9px;left:677.90px;letter-spacing:-0.224px;">BASH_PROFILE File</span>
<span class="t " id="t68" style="top:211px;font-size:8px;line-height:9px;left:753.20px;letter-spacing:-0.108px;">2024/01/22 09:57</span>
<span class="t " id="t69" style="top:224px;font-size:8px;line-height:9px;left:509.20px;letter-spacing:-0.175px;">.bashrc</span>
<span class="t " id="t70" style="top:224px;font-size:8px;line-height:9px;right:354.10px;">1 KB</span>
<span class="t " id="t71" style="top:224px;font-size:7.46px;line-height:9px;left:677.90px;letter-spacing:-0.310px;">BASHRC File</span>
<span class="t " id="t72" style="top:224px;font-size:8px;line-height:9px;left:753.20px;letter-spacing:-0.108px;">2024/01/22 09:57</span>
<span class="t " id="t73" style="top:237px;font-size:8px;line-height:9px;left:509.20px;letter-spacing:0.108px;">.lastlogin</span>
<span class="t " id="t74" style="top:237px;font-size:8px;line-height:9px;right:354.10px;">1 KB</span>
<span class="t " id="t75" style="top:237px;font-size:7.63px;line-height:9px;left:677.90px;letter-spacing:-0.208px;">LASTLOGIN File</span>
<span class="t " id="t76" style="top:237px;font-size:8px;line-height:9px;left:753.20px;letter-spacing:-0.108px;">2024/03/20 12:09</span>
<span class="t " id="t77" style="top:250px;font-size:8px;line-height:9px;left:509.20px;letter-spacing:0.015px;">.myimunify_id</span>
<span class="t " id="t78" style="top:250px;font-size:8px;line-height:9px;right:354.10px;">1 KB</span>
<span class="t " id="t79" style="top:250px;font-size:7.75px;line-height:9px;left:677.90px;letter-spacing:-0.139px;">MYIMUNIFY_ID File</span>
<span class="t " id="t80" style="top:250px;font-size:8px;line-height:9px;left:753.20px;letter-spacing:-0.108px;">2024/01/22 14:39</span>
<span class="t " id="t81" style="top:262px;font-size:8px;line-height:9px;left:509.20px;letter-spacing:0.255px;">.wp-toolkit-identifier</span>
<span class="t " id="t82" style="top:262px;font-size:8px;line-height:9px;right:354.10px;">1 KB</span>
<span class="t " id="t83" style="top:262px;font-size:7.78px;line-height:9px;left:677.90px;letter-spacing:-0.113px;">WP-TOOLKIT-IDE...</span>
<span class="t " id="t84" style="top:262px;font-size:8px;line-height:9px;left:753.20px;letter-spacing:-0.108px;">2024/01/23 08:16</span>
<span class="t " id="t85" style="top:275px;font-size:8px;line-height:9px;left:509.20px;letter-spacing:-0.110px;">access-logs</span>
<span class="t " id="t86" style="top:275px;font-size:8px;line-height:9px;right:354.10px;">1 KB</span>
<span class="t " id="t87" style="top:275px;font-size:8px;line-height:9px;left:677.90px;letter-spacing:0.288px;">File</span>
<span class="t " id="t88" style="top:275px;font-size:8px;line-height:9px;left:753.20px;letter-spacing:-0.108px;">2024/01/22 10:13</span>
<span class="t " id="t89" style="top:288px;font-size:8px;line-height:9px;left:509.20px;letter-spacing:0.013px;">cpbackup-exclude.conf</span>
<span class="t " id="t90" style="top:288px;font-size:8px;line-height:9px;right:354.10px;">1 KB</span>
<span class="t " id="t91" style="top:288px;font-size:7.69px;line-height:9px;left:677.90px;letter-spacing:-0.166px;">CONF File</span>
<span class="t " id="t92" style="top:288px;font-size:8px;line-height:9px;left:753.20px;letter-spacing:-0.108px;">2022/05/18 10:32</span>
<span class="t " id="t93" style="top:301px;font-size:8px;line-height:9px;left:509.90px;letter-spacing:-0.001px;color:#fff">New Folder</span>
<span class="t " id="t94" style="top:301px;font-size:8px;line-height:9px;left:677.90px;letter-spacing:-0.038px;">File Folder</span>
<span class="t " id="t95" style="top:301px;font-size:8px;line-height:9px;left:753.20px;letter-spacing:-0.108px;">2024/03/27 13:07</span>
<span class="t r" id="t96" style="top:320px;font-size:8px;line-height:9px;left:493.40px;letter-spacing:-0.184px;color:#2b5aa5">Log</span>
<span class="t " id="t97" style="top:335px;font-size:8px;line-height:9px;left:492.90px;letter-spacing:-0.253px;color:#2a2af0">STATUS&gt;</span>
<span class="t " id="t98" style="top:335px;font-size:8px;line-height:9px;left:551.90px;letter-spacing:-0.068px;color:#2a2af0">Opening passive mode data connection to 2c0f:f850:1:218::57, port 57820.</span>
<span class="t " id="t99" style="top:345px;font-size:8px;line-height:9px;left:492.90px;letter-spacing:0.001px;color:#5c9a2c">COMMAND&gt;</span>
<span class="t " id="t100" style="top:345px;font-size:8px;line-height:9px;left:551.90px;letter-spacing:-0.096px;color:#5c9a2c">MLSD</span>
<span class="t " id="t101" style="top:356px;font-size:8px;line-height:9px;left:551.90px;letter-spacing:0.062px;color:#222">150 Accepted data connection</span>
<span class="t " id="t102" style="top:366px;font-size:8px;line-height:9px;left:551.90px;letter-spacing:0.004px;color:#222">226 5 matches total</span>
<span class="t " id="t103" style="top:377px;font-size:8px;line-height:9px;left:492.90px;letter-spacing:-0.253px;color:#2a2af0">STATUS&gt;</span>
<span class="t " id="t104" style="top:377px;font-size:8px;line-height:9px;left:551.90px;letter-spacing:-0.156px;color:#2a2af0">Transferred 544 bytes. 2,84 KB/sec.</span>
<span class="t r" id="t105" style="top:397px;font-size:7.6px;line-height:9px;left:4.90px;letter-spacing:-0.169px;">25 item(s), 1 selected.</span>
<span class="t r" id="t106" style="top:397px;font-size:7.51px;line-height:9px;left:885.50px;letter-spacing:-0.242px;">FTP (Standard)</span>
<span class="t r" id="t107" style="top:397px;font-size:7.74px;line-height:9px;left:968.90px;letter-spacing:-0.118px;overflow:hidden;width:52.5px">Duration: 0:02:03</span>
<span class="t r" id="t108" style="top:414px;font-size:7.62px;line-height:9px;left:2.40px;letter-spacing:-0.194px;color:#2b5aa5">Transfer Queue</span>
<span class="t " id="t109" style="top:432px;font-size:8px;line-height:9px;left:96.20px;color:#222">#</span>
<span class="t " id="t110" style="top:432px;font-size:7.67px;line-height:9px;left:102.40px;letter-spacing:-0.178px;color:#222">Workers</span>
<span class="t " id="t111" style="top:431px;font-size:8px;line-height:9px;left:132.20px;letter-spacing:0.347px;color:#222">2</span>
<span class="t r" id="t112" style="top:432px;font-size:7.59px;line-height:9px;left:165.90px;letter-spacing:-0.172px;">Settings...</span>
<span class="t r" id="t113" style="top:432px;font-size:7.79px;line-height:9px;left:204.40px;letter-spacing:-0.110px;">On Queue Completion</span>
<span class="t " id="t114" style="top:446px;font-size:7.74px;line-height:9px;left:18.90px;letter-spacing:-0.126px;color:#222">Operation</span>
<span class="t " id="t115" style="top:446px;font-size:8px;line-height:9px;left:85.40px;letter-spacing:-0.270px;color:#222">Name</span>
<span class="t " id="t116" style="top:446px;font-size:7.59px;line-height:9px;left:178.40px;letter-spacing:-0.190px;color:#222">Transferred</span>
<span class="t " id="t117" style="top:446px;font-size:7.8px;line-height:9px;left:271.90px;letter-spacing:-0.109px;color:#222">Completion</span>
<span class="t " id="t118" style="top:446px;font-size:7.77px;line-height:9px;left:364.90px;letter-spacing:-0.109px;color:#222">Overall</span>
<span class="t " id="t119" style="top:446px;font-size:7.67px;line-height:9px;left:458.40px;letter-spacing:-0.166px;color:#222">Source Path</span>
<span class="t " id="t120" style="top:446px;font-size:7.77px;line-height:9px;left:551.90px;letter-spacing:-0.102px;color:#222">Destination Path</span>
<span class="t r" id="t121" style="top:518px;font-size:7.53px;line-height:9px;left:4.90px;letter-spacing:-0.297px;">Ready</span>
<span class="t r" id="t122" style="top:518px;font-size:7.77px;line-height:9px;left:623.70px;letter-spacing:-0.110px;">On Queue Completion: Do nothing</span>
<span class="t r" id="t123" style="top:518px;font-size:7.73px;line-height:9px;left:787.30px;letter-spacing:-0.127px;">Items: 0</span>
<span class="t r" id="t124" style="top:518px;font-size:7.68px;line-height:9px;left:838.40px;letter-spacing:-0.134px;">Total: 0 bytes</span>
<span class="t r" id="t125" style="top:518px;font-size:7.64px;line-height:9px;left:889.90px;letter-spacing:-0.157px;overflow:hidden;width:63px">Transferred: 0 bytes</span>
<span class="t r" id="t126" style="top:518px;font-size:7.52px;line-height:9px;left:959.30px;letter-spacing:-0.231px;overflow:hidden;width:61.2px">Speed: 0,00 Bytes/s</span>
<span class="t " id="t127" style="top:532px;font-size:7.62px;line-height:9px;left:14.90px;letter-spacing:-0.194px;color:#1e3a6a">Transfer Queue</span>
<span class="t " id="t128" style="top:532px;font-size:7.56px;line-height:9px;left:82.90px;letter-spacing:-0.221px;color:#1e3a6a">Open Files</span>
</div></body></html>
